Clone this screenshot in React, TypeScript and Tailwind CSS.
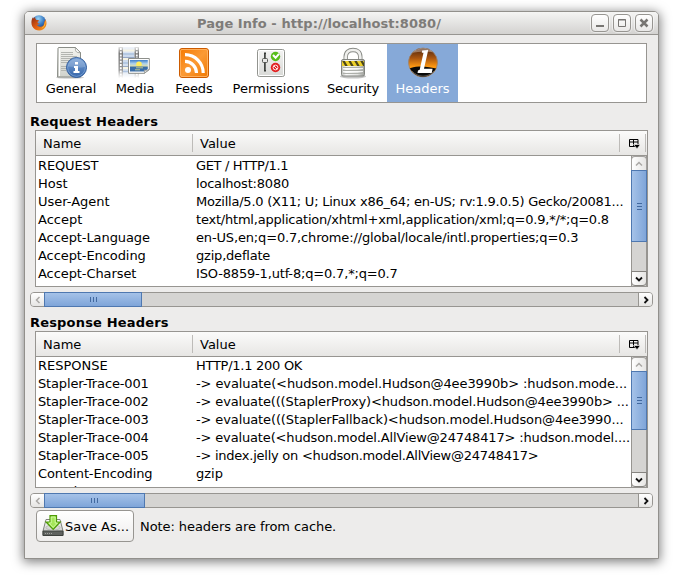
import React from 'react';

type Row = { name: string; value: string; nameFit?: string; valueFit?: string };

const requestRows: Row[] = [
  { name: 'REQUEST', value: 'GET / HTTP/1.1', nameFit: 'tracking-[-0.15px]', valueFit: 'tracking-[-0.36px]' },
  { name: 'Host', value: 'localhost:8080', valueFit: 'tracking-[-0.2px]' },
  { name: 'User-Agent', value: 'Mozilla/5.0 (X11; U; Linux x86_64; en-US; rv:1.9.0.5) Gecko/20081...', valueFit: 'tracking-[-0.23px]' },
  { name: 'Accept', value: 'text/html,application/xhtml+xml,application/xml;q=0.9,*/*;q=0.8', valueFit: 'tracking-[-0.21px]' },
  { name: 'Accept-Language', value: 'en-US,en;q=0.7,chrome://global/locale/intl.properties;q=0.3', nameFit: 'tracking-[-0.08px]', valueFit: 'tracking-[-0.155px]' },
  { name: 'Accept-Encoding', value: 'gzip,deflate', nameFit: 'tracking-[-0.08px]', valueFit: 'tracking-[-0.2px]' },
  { name: 'Accept-Charset', value: 'ISO-8859-1,utf-8;q=0.7,*;q=0.7', nameFit: 'tracking-[-0.08px]', valueFit: 'tracking-[-0.17px]' },
  { name: 'Keep-Alive', value: '300' },
];

const responseRows: Row[] = [
  { name: 'RESPONSE', value: 'HTTP/1.1 200 OK', valueFit: 'tracking-[-0.27px]' },
  { name: 'Stapler-Trace-001', value: '-> evaluate(<hudson.model.Hudson@4ee3990b> :hudson.mode...', nameFit: 'tracking-[-0.15px]', valueFit: 'tracking-[-0.105px]' },
  { name: 'Stapler-Trace-002', value: '-> evaluate(((StaplerProxy)<hudson.model.Hudson@4ee3990b> ...', nameFit: 'tracking-[-0.15px]', valueFit: 'tracking-[-0.14px]' },
  { name: 'Stapler-Trace-003', value: '-> evaluate(((StaplerFallback)<hudson.model.Hudson@4ee3990...', nameFit: 'tracking-[-0.15px]', valueFit: 'tracking-[-0.12px]' },
  { name: 'Stapler-Trace-004', value: '-> evaluate(<hudson.model.AllView@24748417> :hudson.model....', nameFit: 'tracking-[-0.15px]', valueFit: 'tracking-[-0.15px]' },
  { name: 'Stapler-Trace-005', value: '-> index.jelly on <hudson.model.AllView@24748417>', nameFit: 'tracking-[-0.15px]', valueFit: 'tracking-[-0.25px]' },
  { name: 'Content-Encoding', value: 'gzip', nameFit: 'tracking-[-0.12px]' },
  { name: 'X-Hudson', value: '1.0' },
];

function FirefoxIcon() {
  return (
    <svg width="16" height="16" viewBox="0 0 16 16">
      <defs>
        <radialGradient id="ffGlobe" cx=".45" cy=".25" r=".8"><stop offset="0" stopColor="#9ad4f4" /><stop offset=".5" stopColor="#3b7cc4" /><stop offset="1" stopColor="#14306e" /></radialGradient>
        <linearGradient id="ffFox" x1="0" y1="0" x2="1" y2="1"><stop offset="0" stopColor="#8a2c16" /><stop offset=".5" stopColor="#e05a10" /><stop offset="1" stopColor="#f7a521" /></linearGradient>
      </defs>
      <circle cx="8" cy="7.3" r="7" fill="url(#ffGlobe)" />
      <path d="M1.8 2.3C.2 5 0 8.500 1.200 11.200 3 15 8 16.800 12 14.600c3.600-2.100 4.500-6.700 2.400-10.400-.3 2.200-1 2.600-1.300 2.500.6 3.400-1.600 5.300-4 5-1.800-.2-3-1.200-3.400-2.200 1 .4 2 .2 3-.7-1.700-.3-2.400-1-2-2.100.6-.4 1.400-.5 1.500-1-1-.8-2.500-.6-3-1C4.200 3.900 4 3 4.200 2.300 3.100 2.500 2.600 3.200 2.400 3.700 2 3.300 1.900 2.900 1.800 2.300z" fill="url(#ffFox)" />
      <path d="M14.200 4.800c1.200 4.300-1 8.500-4.700 8.800 3-.9 4.500-3.300 4.700-8.800z" fill="#ffd34a" />
    </svg>
  );
}

function GeneralIcon() {
  return (
    <svg width="32" height="32" viewBox="0 0 32 32">
      <defs>
        <linearGradient id="paper" x1="0" y1="0" x2="0" y2="1"><stop offset="0" stopColor="#f4f4f0" /><stop offset="1" stopColor="#d0d2cc" /></linearGradient>
        <linearGradient id="info" x1="0" y1="0" x2="0" y2="1"><stop offset="0" stopColor="#7ca4d8" /><stop offset="1" stopColor="#3464a8" /></linearGradient>
      </defs>
      <ellipse cx="15" cy="30.500" rx="14" ry="1.300" fill="#000" opacity=".18" />
      <path d="M3.500.5h17l5 5v24.500h-23l.5-29z" fill="url(#paper)" stroke="#8a8d87" />
      <path d="M4.500 1.500v27.500" stroke="#fff" />
      <path d="M20.500.7c-.3 2.500 0 5.300 5 5z" fill="#fff" stroke="#8a8d87" strokeWidth=".8" />
      <path d="M6 5.500h12M6 7.500h12M6 9.500h16M6 11.500h11M6 13.500h9M6 15.500h10M6 19.500h5M6 21.500h5M6 23.500h5" stroke="#b3b5b0" />
      <circle cx="21.500" cy="20.500" r="10" fill="url(#info)" stroke="#2f5b9b" />
      <circle cx="21.500" cy="20.500" r="8.800" fill="none" stroke="#7ba3d6" strokeWidth=".8" />
      <path d="M12.700 19.500a8.900 8.900 0 0 1 17.600 0c-4 2.500-11 0-17.600 0z" fill="#fff" opacity=".18" />
      <path d="M20 15h3v2.400h-3zM19 19h4v5h1.500v2h-6v-2h1.500v-3h-1z" fill="#fff" />
    </svg>
  );
}

function MediaIcon() {
  return (
    <svg width="32" height="32" viewBox="0 0 32 32" className="-ml-[2px]">
      <defs>
        <linearGradient id="film" x1="0" y1="0" x2="0" y2="1"><stop offset="0" stopColor="#777" stopOpacity=".2" /><stop offset=".2" stopColor="#777" /><stop offset=".75" stopColor="#999" /><stop offset="1" stopColor="#ccc" stopOpacity=".1" /></linearGradient>
        <linearGradient id="frames" x1="0" y1="0" x2="0" y2="1"><stop offset="0" stopColor="#d9e2ef" stopOpacity=".4" /><stop offset=".3" stopColor="#c9d8ec" /><stop offset=".75" stopColor="#dce5f1" /><stop offset="1" stopColor="#fff" /></linearGradient>
        <linearGradient id="sky" x1="0" y1="0" x2="0" y2="1"><stop offset="0" stopColor="#3d7eca" /><stop offset=".5" stopColor="#a8cdea" /><stop offset="1" stopColor="#eee69b" /></linearGradient>
      </defs>
      <path d="M5 0h11.500v31H5z" fill="url(#frames)" />
      <path d="M.5 0h4.500v31H.5zM16.500 0H21v31h-4.500z" fill="url(#film)" />
      <path d="M2.800 1v30M18.800 1v30" stroke="#fff" strokeWidth="1.800" strokeDasharray="2 1.200" />
      <path d="M5 3.500h11.500M5 12h11.500M5 21h11.500" stroke="#f6f4e4" strokeWidth="2.200" />
      <path d="M5 10.500h11.500M5 19.500h11.500" stroke="#7f93b5" opacity=".7" />
      <path d="M5 7h11M5 16h6M5 24.500h9" stroke="#a3bcdc" strokeWidth="1.500" opacity=".8" />
      <path d="M10.500 11.500h20.800v11l-5 3.800H10.500z" fill="#fff" stroke="#8d8f8b" />
      <path d="M12 13h17.800v7H12z" fill="url(#sky)" />
      <circle cx="21" cy="17.300" r="2.800" fill="#ffed5c" />
      <path d="M12 19.500h17.800V22l-3 2.500H12z" fill="#396da8" />
      <path d="M18 20.800h7M17 22.800h5" stroke="#c9cf8d" strokeWidth=".9" />
      <path d="M26.300 26.300c.5-1.300.3-2.600-.3-3.300 2 .5 4 .2 5.300-.5z" fill="#e9eae7" stroke="#8d8f8b" strokeWidth=".8" />
    </svg>
  );
}

function FeedIcon() {
  return (
    <svg width="32" height="32" viewBox="0 0 32 32">
      <defs><linearGradient id="feed" x1="0" y1="0" x2="1" y2="1"><stop offset="0" stopColor="#f57900" /><stop offset=".5" stopColor="#fb9a35" /><stop offset="1" stopColor="#f07800" /></linearGradient></defs>
      <rect x="1.500" y="1.500" width="29" height="29" rx="2.500" fill="url(#feed)" stroke="#cc5b00" />
      <rect x="2.500" y="2.500" width="27" height="27" rx="1.500" fill="none" stroke="#ffb464" strokeWidth=".9" />
      <circle cx="10" cy="23" r="3" fill="#fff" />
      <path d="M7 14.300a11.700 11.700 0 0 1 11.500 11.700M7 7.600a18.300 18.300 0 0 1 18.200 18.400" fill="none" stroke="#fff" strokeWidth="3.200" />
    </svg>
  );
}

function PermissionsIcon() {
  return (
    <svg width="32" height="32" viewBox="0 0 32 32">
      <defs><linearGradient id="perm" x1="0" y1="0" x2="0" y2="1"><stop offset="0" stopColor="#f4f4f3" /><stop offset="1" stopColor="#d8d9d6" /></linearGradient></defs>
      <rect x="2.500" y="2.500" width="27" height="27" rx="2" fill="url(#perm)" stroke="#92948f" />
      <rect x="3.500" y="3.500" width="25" height="25" rx="1" fill="none" stroke="#fff" />
      <path d="M10 5.500v19" stroke="#383b38" strokeWidth="2" />
      <path d="M10.300 7v16" stroke="#a1a3a0" strokeWidth=".6" />
      <rect x="7.500" y="11.500" width="5" height="4" rx="1" fill="#e8e8e6" stroke="#555753" />
      <circle cx="20.500" cy="9.500" r="4.700" fill="#58bd1a" />
      <path d="m18 8 2.600 2.800 3.400-4" fill="none" stroke="#fff" strokeWidth="2" />
      <circle cx="20.500" cy="20.500" r="4.700" fill="#e22222" />
      <circle cx="20.500" cy="20.500" r="2.400" fill="none" stroke="#fff" strokeWidth=".9" />
      <path d="m18.900 18.900 3.200 3.200" stroke="#fff" strokeWidth=".9" />
    </svg>
  );
}

function SecurityIcon() {
  return (
    <svg width="32" height="32" viewBox="0 0 32 32">
      <defs>
        <linearGradient id="lock" x1="0" y1="0" x2="1" y2="0"><stop offset="0" stopColor="#b8bab6" /><stop offset=".2" stopColor="#fafafa" /><stop offset=".7" stopColor="#e0e1df" /><stop offset="1" stopColor="#9b9d98" /></linearGradient>
        <clipPath id="stripeClip"><path d="M5 14h22v5H5z" /></clipPath>
      </defs>
      <ellipse cx="16" cy="29.500" rx="13" ry="2" fill="#000" opacity=".23" />
      <path d="M8.700 14V10C8.700 5.200 11.700 3 16 3s7.300 2.200 7.300 7v4" fill="none" stroke="#898b86" strokeWidth="4.400" />
      <path d="M8.700 14V10C8.700 5.200 11.700 3 16 3s7.300 2.200 7.300 7v4" fill="none" stroke="#efefed" strokeWidth="2.700" />
      <rect x="4.500" y="12.500" width="23" height="16.500" rx="1.500" fill="url(#lock)" stroke="#838580" />
      <path d="M5 14h22v5H5z" fill="#edd02a" />
      <path clipPath="url(#stripeClip)" d="m6 13 4 7m2-7 4 7m2-7 4 7m2-7 4 7" stroke="#4b461b" strokeWidth="2.200" />
      <path d="M6 20.500h20M6 23.500h20M6 26.500h20" stroke="#aeb0ab" />
      <path d="M6 21.500h20M6 24.500h20" stroke="#fff" opacity=".8" />
    </svg>
  );
}

function HeadersIcon() {
  return (
    <svg width="32" height="32" viewBox="0 0 32 32">
      <defs>
        <linearGradient id="orb" x1="0" y1="0" x2="0" y2="1"><stop offset="0" stopColor="#4a2410" /><stop offset=".35" stopColor="#a95510" /><stop offset=".65" stopColor="#ff9a13" /><stop offset="1" stopColor="#bd6500" /></linearGradient>
        <clipPath id="orbClip"><circle cx="16" cy="15.500" r="14.200" /></clipPath>
      </defs>
      <circle cx="16" cy="15.500" r="14.500" fill="url(#orb)" stroke="#9a836f" strokeWidth=".8" />
      <g clipPath="url(#orbClip)">
        <path d="M0 22c5-1.500 7-2 12-2.500 6-.5 12 1 20 2.500V32H0z" fill="#090909" />
        <path d="M4 6C9-1 23-1 28 6c-6-2-17-1-24 0z" fill="#fff" opacity=".35" />
        <path d="M5 24a14.200 14.200 0 0 0 22 0" fill="none" stroke="#777" strokeWidth=".8" />
      </g>
      <path d="m15.200 3.500 6-.5-4.200 18.700h8.600L24.700 26H10.500l.5-2.500 1.700-.8 3.800-17h-1.700z" fill="#fff" />
    </svg>
  );
}

const tabs = [
  { label: 'General', Icon: GeneralIcon, box: 'w-[68px] tracking-[-0.1px]' },
  { label: 'Media', Icon: MediaIcon, box: 'w-[60px] tracking-[-0.1px]' },
  { label: 'Feeds', Icon: FeedIcon, box: 'w-[58px] tracking-[-0.1px]' },
  { label: 'Permissions', Icon: PermissionsIcon, box: 'w-24' },
  { label: 'Security', Icon: SecurityIcon, box: 'w-[68px] tracking-[-0.15px]' },
  { label: 'Headers', Icon: HeadersIcon, box: 'w-[71px] bg-[#86a9d8] text-white' },
];

function WindowButton({ children }: { children: React.ReactNode }) {
  return (
    <div className="flex h-[18px] w-[18px] items-center justify-center rounded-[4px] border border-[#979591] bg-linear-to-b from-white to-[#e9e8e7] shadow-[0_0_0_1px_#ffffff80]">
      <svg width="16" height="16" viewBox="0 0 16 16" fill="none" stroke="#777572">{children}</svg>
    </div>
  );
}

function ColumnPicker() {
  return (
    <svg width="11" height="10" viewBox="0 0 11 10" className="ml-[9px] mt-[2px]">
      <path d="M.5.5h8.500v7H.500zM.500 3h8.500M4.500.500v7" stroke="#000" fill="none" />
      <path d="M4.500 5.500h7L8 9.700z" fill="#000" stroke="#f2f1ef" strokeWidth=".7" />
    </svg>
  );
}

function VScroll({ thumb }: { thumb: string }) {
  return (
    <div className="flex w-4 shrink-0 flex-col border-x border-[#979591] bg-[#d5d4d2]">
      <div className="-mx-px flex h-[14px] items-center justify-center rounded-t-[4px] border border-b-0 border-[#a3a19e] bg-linear-to-r from-white to-[#e6e5e3]">
        <svg width="8" height="6" viewBox="0 0 8 6" fill="none" stroke="#aaa8a5" strokeWidth="1.500"><path d="m1 4.500 3-3 3 3" /></svg>
      </div>
      <div className={`-mx-px flex flex-col items-center justify-center gap-[2px] border border-[#4f78b0] bg-linear-to-r from-[#a5c2e8] to-[#7fa5d9] ${thumb}`}>
        <i className="h-px w-[5px] bg-[#42699f]" /><i className="h-px w-[5px] bg-[#42699f]" /><i className="h-px w-[5px] bg-[#42699f]" />
      </div>
      <div className="-mx-px mt-auto flex h-[15px] items-center justify-center rounded-b-[4px] border border-[#85837f] bg-linear-to-r from-white to-[#e6e5e3]">
        <svg width="8" height="6" viewBox="0 0 8 6" fill="none" stroke="#111" strokeWidth="1.800"><path d="m1 1.500 3 3 3-3" /></svg>
      </div>
    </div>
  );
}

function HScroll({ thumb }: { thumb: string }) {
  return (
    <div className="ml-[5px] mt-[5px] flex h-[15px] w-[623px] rounded-[4px] border border-[#979591] bg-[#d5d4d2]">
      <div className="flex w-[13px] items-center justify-center rounded-l-[3px] bg-linear-to-b from-white to-[#e6e5e3]">
        <svg width="6" height="8" viewBox="0 0 6 8" fill="none" stroke="#aaa8a5" strokeWidth="1.500"><path d="m4.500 1-3 3 3 3" /></svg>
      </div>
      <div className={`-my-px flex items-center justify-center gap-[2px] border border-[#4f78b0] bg-linear-to-b from-[#a5c2e8] to-[#7fa5d9] ${thumb}`}>
        <i className="h-[5px] w-px bg-[#42699f]" /><i className="h-[5px] w-px bg-[#42699f]" /><i className="h-[5px] w-px bg-[#42699f]" />
      </div>
      <div className="ml-auto flex w-[14px] items-center justify-center rounded-r-[3px] border-l border-[#979591] bg-linear-to-b from-white to-[#e6e5e3]">
        <svg width="6" height="8" viewBox="0 0 6 8" fill="none" stroke="#111" strokeWidth="1.800"><path d="m1.500 1 3 3-3 3" /></svg>
      </div>
    </div>
  );
}

function HeaderTable({ rows, thumb, inset }: { rows: Row[]; thumb: string; inset: string }) {
  return (
    <div className="ml-[10px] flex h-[157px] w-[613px] flex-col border border-[#979591] bg-white">
      <div className="flex h-[25px] shrink-0 items-center border-b border-[#979591] bg-linear-to-b from-[#fbfbfa] to-[#e7e6e4]">
        <div className="flex h-[18px] w-[157px] items-center border-r border-[#bdbbb8] pl-[7px] pt-[2px]">Name</div>
        <div className="flex h-[18px] w-[427px] items-center border-r border-[#bdbbb8] pl-[7px] pt-[2px]">Value</div>
        <div className="flex h-[18px] w-[26px] items-center border-r border-[#bdbbb8]"><ColumnPicker /></div>
      </div>
      <div className="flex min-h-0 grow">
        <div className={`h-full min-w-0 grow overflow-hidden ${inset}`}>
          {rows.map(({ name, value, nameFit = '', valueFit = '' }) => (
            <div key={name} className="flex h-[18px] items-center whitespace-pre leading-[18px]">
              <div className={`w-40 shrink-0 pl-[2px] ${nameFit}`}>{name}</div>
              <div className={valueFit}>{value}</div>
            </div>
          ))}
        </div>
        <VScroll thumb={thumb} />
      </div>
    </div>
  );
}

function SaveIcon() {
  return (
    <svg width="22" height="22" viewBox="0 0 22 22">
      <defs><linearGradient id="drive" x1="0" y1="0" x2="0" y2="1"><stop offset="0" stopColor="#fff" /><stop offset="1" stopColor="#b8bab6" /></linearGradient></defs>
      <path d="M4 4.500h14l3 11.500v4.500H1V16z" fill="url(#drive)" stroke="#80827d" />
      <path d="M1 16h20v4.500H1z" fill="#5f625f" stroke="#3d403d" />
      <path d="M3 18.500h7" stroke="#a0a29e" strokeDasharray="1 1" />
      <ellipse cx="11" cy="12.500" rx="7" ry="2.600" fill="#d6d8d4" stroke="#aaa" strokeWidth=".6" />
      <path d="M8 .7h6.500V7h3.700L11.200 14.500 4 7h4z" fill="#a4e659" stroke="#4e9a06" strokeWidth="1.200" />
      <path d="M9.200 2h4v6h2.200l-4.200 4.500L7 8h2.200z" fill="none" stroke="#dcffb5" strokeWidth=".7" />
    </svg>
  );
}

export default function App() {
  return (
    <div className="h-[576px] w-[679px] overflow-hidden bg-white pl-6 pt-[11px] font-['DejaVu_Sans',sans-serif] text-[13px] leading-4 text-black">
      <div className="h-[548px] w-[635px] rounded-t-[5px] border border-[#92908c] bg-[#edeceb] shadow-[0_2px_11px_1px_rgba(0,0,0,0.5)]">
        <div className="flex h-[23px] items-center rounded-t-[4px] border-b border-[#979591] bg-linear-to-b from-[#f5f5f4] to-[#d3d2d0] pl-[6px] pr-[5px]">
          <FirefoxIcon />
          <div className="flex-1 pt-px text-center font-bold tracking-[0.06px] text-[#7e7c79]"><span>Page Info - http://localhost:8080/</span></div>
          <div className="flex gap-1">
            <WindowButton><path d="M4 11h8" strokeWidth="2" /></WindowButton>
            <WindowButton><path d="M4.500 4.500h7v7h-7zM4 5h8" /></WindowButton>
            <WindowButton><path d="m4.500 4.500 7 7m0-7-7 7" strokeWidth="2.500" /></WindowButton>
          </div>
        </div>
        <div className="ml-[11px] mt-2 flex h-[60px] w-[611px] border border-[#979591] bg-white">
          {tabs.map(({ label, Icon, box }) => (
            <div key={label} className={`flex flex-col items-center pt-[3px] ${box}`}>
              <Icon />
              <span className="mt-[2px]">{label}</span>
            </div>
          ))}
        </div>
        <div className="ml-[5px] mt-[11px] h-4 font-bold tracking-[0.18px]"><span>Request Headers</span></div>
        <HeaderTable rows={requestRows} thumb="h-[72px]" inset="pt-px" />
        <HScroll thumb="w-[98px]" />
        <div className="ml-[5px] mt-2 h-4 font-bold tracking-[0.18px]"><span>Response Headers</span></div>
        <HeaderTable rows={responseRows} thumb="h-[59px]" inset="pt-0" />
        <HScroll thumb="w-[101px]" />
        <div className="ml-[11px] mt-[2px] flex items-center">
          <div className="flex h-8 w-[98px] items-center gap-px rounded-[4px] border border-[#979591] bg-linear-to-b from-white to-[#eeedec] pl-[5px] whitespace-nowrap">
            <SaveIcon /><span className="pt-[2px]">Save As...</span>
          </div>
          <span className="ml-[6px] pt-[2px] tracking-[-0.07px]">Note: headers are from cache.</span>
        </div>
      </div>
    </div>
  );
}
